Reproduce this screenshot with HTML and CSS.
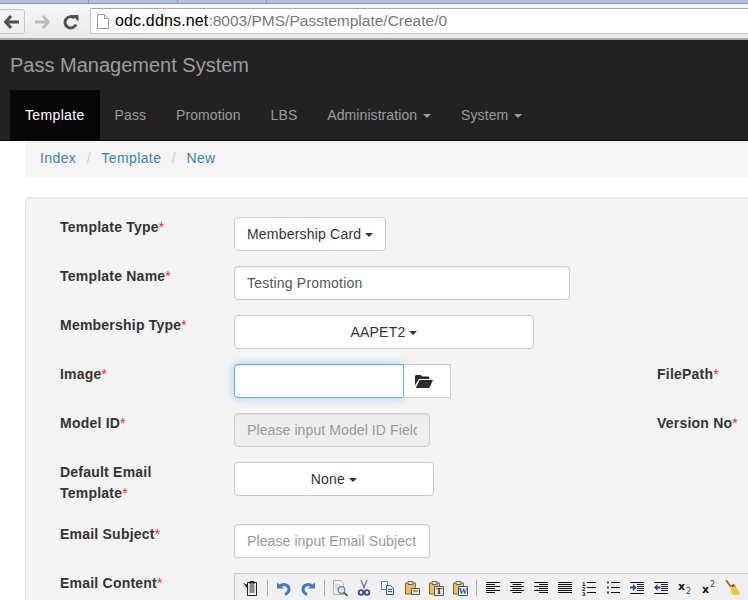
FILE: index.html
```html
<!DOCTYPE html>
<html lang="en">
<head>
    <meta charset="UTF-8">
    <meta name="viewport" content="width=device-width, initial-scale=1.0">
    <title>Pass Management System</title>
    <link rel="stylesheet" href="styles.css">
</head>
<body>
    <div class="browser-tabs"><span></span><span></span><span></span></div>
    <div class="browser-bar">
        <div class="browser-btn browser-back">
            <svg width="16" height="14" viewBox="0 0 16 14"><path d="M7 1 1.500 7 7 13M2 7h13" fill="none" stroke="#4f4f4f" stroke-width="3"/></svg>
        </div>
        <div class="browser-btn">
            <svg width="16" height="14" viewBox="0 0 16 14"><path d="M9 1l5.500 6L9 13M14 7H1" fill="none" stroke="#bdbdbd" stroke-width="3"/></svg>
        </div>
        <div class="browser-btn browser-reload">
            <svg width="16" height="16" viewBox="0 0 16 16"><path d="M13 10.500A5.700 5.700 0 1 1 11.500 4" fill="none" stroke="#505050" stroke-width="3"/><path d="M9 1h6.500v6.500z" fill="#505050"/></svg>
        </div>
        <div class="address">
            <svg width="12" height="15" viewBox="0 0 12 15"><path d="M.5.500h7l4 4v10H.5z" fill="#fff" stroke="#9a9a9a"/><path d="M7.500.500v4h4" fill="#e4e4e4" stroke="#9a9a9a"/></svg>
            <span class="address-host">odc.ddns.net</span><span class="address-path">:8003/PMS/Passtemplate/Create/0</span>
        </div>
    </div>

    <nav class="navbar">
        <a class="brand" href="#">Pass Management System</a>
        <ul class="nav">
            <li class="active"><a href="#">Template</a></li>
            <li><a href="#">Pass</a></li>
            <li><a href="#">Promotion</a></li>
            <li><a href="#">LBS</a></li>
            <li><a href="#">Administration <b class="caret"></b></a></li>
            <li><a href="#">System <b class="caret"></b></a></li>
        </ul>
    </nav>

    <div class="container">
        <ol class="breadcrumb">
            <li><a href="#">Index</a></li>
            <li><a href="#">Template</a></li>
            <li><a href="#">New</a></li>
        </ol>

        <form class="well">
            <div class="form-row">
                <label>Template Type<span class="req">*</span></label>
                <div><button type="button" class="btn">Membership Card <b class="caret"></b></button></div>
            </div>
            <div class="form-row">
                <label>Template Name<span class="req">*</span></label>
                <div><input class="field field-name" type="text" value="Testing Promotion"></div>
            </div>
            <div class="form-row">
                <label>Membership Type<span class="req">*</span></label>
                <div><button type="button" class="btn btn-wide">AAPET2 <b class="caret"></b></button></div>
            </div>
            <div class="form-row">
                <label>Image<span class="req">*</span></label>
                <div class="input-group">
                    <input class="field field-image" type="text">
                    <span class="addon">
                        <svg width="18" height="14" viewBox="0 0 18 14"><path d="M0 2.500C0 1.500.7 1 1.500 1H6l1 1.500h6c.8 0 1.300.5 1.300 1.300V5H4L0 11.500z" fill="#2b2b2b"/><path d="M4.600 6H18l-3.600 8H.8z" fill="#2b2b2b"/></svg>
                    </span>
                </div>
                <label>FilePath<span class="req">*</span></label>
            </div>
            <div class="form-row">
                <label>Model ID<span class="req">*</span></label>
                <div><input class="field field-std" type="text" placeholder="Please input Model ID Field" disabled></div>
                <label>Version No<span class="req">*</span></label>
            </div>
            <div class="form-row">
                <label>Default Email Template<span class="req">*</span></label>
                <div><button type="button" class="btn btn-mid">None <b class="caret"></b></button></div>
            </div>
            <div class="form-row">
                <label>Email Subject<span class="req">*</span></label>
                <div><input class="field field-std" type="text" placeholder="Please input Email Subject"></div>
            </div>
            <div class="form-row">
                <label>Email Content<span class="req">*</span></label>
                <div class="editor">
                    <div class="toolbar">
                        <span class="tool"><svg width="16" height="16" viewBox="0 0 16 16"><path d="M4.500 2.500h9v13h-9z" fill="#eee" stroke="#222"/><path d="M7 1.500h4v2.500H7zM6.500 6h5M6.500 8h5M6.500 10h5M6.500 12h5" fill="none" stroke="#222"/><path d="M0 3l5 2v4z" fill="#222"/></svg></span>
                        <span class="tool-sep"></span>
                        <span class="tool"><svg width="16" height="16" viewBox="0 0 16 16"><path d="M3 7c3-4 10-3 10 2.500 0 2.500-2 4-4 5" fill="none" stroke="#3f78c4" stroke-width="3"/><path d="M1 2.500l7 6H1z" fill="#3f78c4"/></svg></span>
                        <span class="tool"><svg width="16" height="16" viewBox="0 0 16 16"><path d="M13 7C10 3 3 4 3 9.500c0 2.500 2 4 4 5" fill="none" stroke="#3f78c4" stroke-width="3"/><path d="M15 2.500l-7 6h7z" fill="#3f78c4"/></svg></span>
                        <span class="tool-sep tool-sep-narrow"></span>
                        <span class="tool"><svg width="16" height="16" viewBox="0 0 16 16"><path d="M1.500.500h7l3 3v11h-10z" fill="#f2f2f2" stroke="#b0b0b0"/><path d="M3 5h5M3 7h3M3 9h3" stroke="#c4c4c4"/><circle cx="9.500" cy="10" r="3.300" fill="#dbe8f5" stroke="#6c8296" stroke-width="1.200"/><path d="M12 12.500l3.500 3.500" stroke="#444" stroke-width="1.600"/></svg></span>
                        <span class="tool"><svg width="16" height="16" viewBox="0 0 16 16"><path d="M5 0l3.500 8.500M11 0 7.500 8.500" stroke="#777" stroke-width="1.300"/><circle cx="5" cy="12.500" r="2.300" fill="none" stroke="#2d4fa8" stroke-width="1.800"/><circle cx="11" cy="12.500" r="2.300" fill="none" stroke="#2d4fa8" stroke-width="1.800"/></svg></span>
                        <span class="tool"><svg width="16" height="16" viewBox="0 0 16 16"><path d="M1.500 1.500h6v8h-6z" fill="#fff" stroke="#5c86c0"/><path d="M6.500 5.500h4l3 3v6h-7z" fill="#dce8f7" stroke="#315d9e"/><path d="M8 9.500h4M8 11.500h4" stroke="#315d9e"/></svg></span>
                        <span class="tool"><svg width="16" height="16" viewBox="0 0 16 16"><path d="M1.500 3h10v11h-10z" fill="#e8c15a" stroke="#8a6a1c"/><path d="M4 1.500h5v3H4z" fill="#ddd" stroke="#666"/><path d="M7.500 8.500h8v6h-8z" fill="#e6e6e6" stroke="#555"/><path d="M9 11h5" stroke="#555"/></svg></span>
                        <span class="tool"><svg width="16" height="16" viewBox="0 0 16 16"><path d="M1.500 3h10v11h-10z" fill="#e8c15a" stroke="#8a6a1c"/><path d="M4 1.500h5v3H4z" fill="#ddd" stroke="#666"/><path d="M6.500 6.500h9v9h-9z" fill="#e6e6e6" stroke="#555"/><text x="11" y="14" class="tool-glyph" fill="#222">T</text></svg></span>
                        <span class="tool"><svg width="16" height="16" viewBox="0 0 16 16"><path d="M1.500 3h10v11h-10z" fill="#e8c15a" stroke="#8a6a1c"/><path d="M4 1.500h5v3H4z" fill="#ddd" stroke="#666"/><path d="M6.500 6.500h9v9h-9z" fill="#eef3fb" stroke="#2d5aa8"/><text x="11" y="14" class="tool-glyph" fill="#2d5aa8">W</text></svg></span>
                        <span class="tool-sep"></span>
                        <span class="tool"><svg width="16" height="16" viewBox="0 0 16 16"><path d="M1 2.500h14M1 4.500h9M1 6.500h14M1 8.500h9M1 10.500h14M1 12.500h9" stroke="#111"/></svg></span>
                        <span class="tool"><svg width="16" height="16" viewBox="0 0 16 16"><path d="M1 2.500h14M3.500 4.500h9M1 6.500h14M3.500 8.500h9M1 10.500h14M3.500 12.500h9" stroke="#111"/></svg></span>
                        <span class="tool"><svg width="16" height="16" viewBox="0 0 16 16"><path d="M1 2.500h14M6 4.500h9M1 6.500h14M6 8.500h9M1 10.500h14M6 12.500h9" stroke="#111"/></svg></span>
                        <span class="tool"><svg width="16" height="16" viewBox="0 0 16 16"><path d="M1 2.500h14M1 4.500h14M1 6.500h14M1 8.500h14M1 10.500h14M1 12.500h14" stroke="#111"/></svg></span>
                        <span class="tool"><svg width="16" height="16" viewBox="0 0 16 16"><text x="1" y="5.500" class="tool-num">1</text><text x="1" y="10.500" class="tool-num">2</text><text x="1" y="15.500" class="tool-num">3</text><path d="M6 2.500h9M6 7.500h9M6 12.500h9" stroke="#111"/></svg></span>
                        <span class="tool"><svg width="16" height="16" viewBox="0 0 16 16"><path d="M2 1.500h2v2H2zM2 6.500h2v2H2zM2 11.500h2v2H2z" fill="#444"/><path d="M6 2.500h9M6 7.500h9M6 12.500h9" stroke="#111"/></svg></span>
                        <span class="tool"><svg width="16" height="16" viewBox="0 0 16 16"><path d="M1 2.500h14M1 13.500h14" stroke="#111"/><path d="M8 4.500h7M8 6.500h7M8 8.500h7M8 10.500h7" stroke="#222"/><path d="M1 6.500h3V4l3.500 3.500L4 11V8.500H1z" fill="#234a8e"/></svg></span>
                        <span class="tool"><svg width="16" height="16" viewBox="0 0 16 16"><path d="M1 2.500h14M1 13.500h14" stroke="#111"/><path d="M8 4.500h7M8 6.500h7M8 8.500h7M8 10.500h7" stroke="#222"/><path d="M7.500 6.500h-3V4L1 7.500 4.500 11V8.500h3z" fill="#234a8e"/></svg></span>
                        <span class="tool"><svg width="16" height="16" viewBox="0 0 16 16"><text x="1" y="10" class="tool-x">x</text><text x="9" y="14" class="tool-sub">2</text></svg></span>
                        <span class="tool"><svg width="16" height="16" viewBox="0 0 16 16"><text x="1" y="13" class="tool-x">x</text><text x="9" y="7" class="tool-sub">2</text></svg></span>
                        <span class="tool"><svg width="16" height="16" viewBox="0 0 16 16"><path d="M1 0l5 7" stroke="#a8702a" stroke-width="2"/><path d="M6 5l3-1 2 3-3 2z" fill="#c0392b"/><path d="M6 8l4-2c2 2 4 5 5 8-3 2-7 1-9-1 0-2 0-4 0-5z" fill="#ecc92e"/></svg></span>
                    </div>
                    <div class="editor-body"></div>
                </div>
            </div>
        </form>
    </div>
</body>
</html>
```

FILE: styles.css
```css
html, body {
    height: 100%;
    overflow: hidden;
}
body {
    margin: 0;
    font-family: "Liberation Sans", Arial, sans-serif;
    font-size: 14px;
    line-height: 20px;
    color: #333;
    background-color: #fff;
}
a {
    text-decoration: none;
}
.browser-tabs {
    height: 3px;
    display: flex;
    background-color: #b4c0d6;
    border-bottom: 1px solid #8f9aad;
}
.browser-tabs span {
    width: 88px;
    border-right: 1px solid #8e9bb3;
}
.browser-bar {
    height: 36px;
    box-sizing: border-box;
    display: flex;
    align-items: flex-start;
    padding-top: 4px;
    background: linear-gradient(#f7f7f7, #e9e9e9);
    border-bottom: 2px solid #a8a8a8;
}
.browser-btn {
    width: 25px;
    height: 25px;
    flex: none;
    display: flex;
    align-items: center;
    justify-content: center;
    margin-right: 4px;
    margin-top: 1px;
}
.browser-back {
    box-sizing: border-box;
    background-color: #f0f0f0;
    border: 1px solid #c6c6c6;
    border-left: none;
    border-radius: 0 3px 3px 0;
}
.browser-reload {
    margin-right: 7px;
}
.address {
    flex: 1;
    height: 26px;
    box-sizing: border-box;
    display: flex;
    align-items: center;
    padding-left: 6px;
    background-color: #fff;
    border: 1px solid #c4c4c4;
    border-top-color: #a6a6a6;
    border-right: none;
    border-radius: 2px 0 0 2px;
    font-size: 16px;
}
.address svg {
    margin-right: 6px;
}
.address-host {
    color: #000;
    letter-spacing: 0.15px;
}
.address-path {
    color: #777;
    font-size: 15.5px;
}
.navbar {
    background-color: #222;
    border-bottom: 1px solid #080808;
}
.brand {
    display: block;
    height: 50px;
    padding-left: 10px;
    font-size: 20px;
    line-height: 50px;
    color: #9d9d9d;
}
.nav {
    display: flex;
    list-style: none;
    margin: 0;
    padding: 0 0 0 10px;
}
.nav a {
    display: block;
    padding: 15px;
    color: #9d9d9d;
    letter-spacing: 0.08px;
}
.nav .active a {
    color: #fff;
    background-color: #080808;
    letter-spacing: 0.35px;
}
.caret {
    display: inline-block;
    width: 0;
    height: 0;
    margin-left: 2px;
    vertical-align: middle;
    border-top: 4px solid;
    border-right: 4px solid transparent;
    border-left: 4px solid transparent;
}
.container {
    width: 1000px;
    padding-left: 25px;
}
.breadcrumb {
    display: flex;
    list-style: none;
    margin: 0 0 20px;
    padding: 7px 15px 9px;
    background-color: #f5f5f5;
    border-radius: 4px;
    letter-spacing: 0.4px;
}
.breadcrumb a {
    color: #3e7fbe;
}
.breadcrumb li + li::before {
    content: "/";
    padding: 0 10.400px;
    color: #ccc;
}
.well {
    padding: 19px 34px;
    background-color: #f4f4f4;
    border: 1px solid #e3e3e3;
    border-radius: 4px;
    box-shadow: inset 0 1px 1px rgba(0, 0, 0, 0.05);
}
.form-row {
    display: grid;
    grid-template-columns: 174px 423px 1fr;
    margin-bottom: 15px;
}
.form-row label {
    display: block;
    width: 140px;
    margin-bottom: 5px;
    font-weight: bold;
    line-height: 21px;
    letter-spacing: 0.22px;
}
.req {
    color: #f22;
    font-weight: normal;
}
.btn {
    height: 34px;
    padding: 6px 12px;
    font: inherit;
    letter-spacing: 0.2px;
    color: #333;
    background-color: #fff;
    border: 1px solid #ccc;
    border-radius: 4px;
}
.btn .caret {
    margin-left: 0;
}
.btn-wide {
    width: 300px;
}
.btn-mid {
    width: 200px;
}
.field {
    display: block;
    height: 34px;
    box-sizing: border-box;
    padding: 6px 12px;
    font: inherit;
    letter-spacing: 0.2px;
    color: #555;
    background-color: #fff;
    border: 1px solid #ccc;
    border-radius: 4px;
    box-shadow: inset 0 1px 1px rgba(0, 0, 0, 0.075);
}
.field::placeholder {
    color: #999;
    opacity: 1;
    letter-spacing: 0.1px;
}
.field:disabled {
    background-color: #eee;
}
.field-name {
    width: 336px;
}
.field-std {
    width: 196px;
}
.field-image {
    width: 170px;
    border-color: #66afe9;
    border-radius: 4px 0 0 4px;
    box-shadow: inset 0 1px 1px rgba(0, 0, 0, 0.075), 0 0 8px rgba(102, 175, 233, 0.6);
}
.input-group {
    display: flex;
}
.addon {
    width: 47px;
    height: 34px;
    box-sizing: border-box;
    display: flex;
    align-items: center;
    padding-left: 11px;
    background-color: #fff;
    border: 1px solid #ccc;
    border-left: none;
}
.editor {
    grid-column: 2 / 4;
    width: 760px;
    border: 1px solid #c8c8c8;
}
.toolbar {
    display: flex;
    align-items: center;
    height: 27px;
    padding-left: 4px;
    background-color: #f0f0f0;
}
.tool {
    width: 24px;
    flex: none;
    display: flex;
    justify-content: center;
}
.tool-sep {
    width: 9px;
    height: 16px;
    flex: none;
    background: linear-gradient(#a9a9a9, #a9a9a9) center / 1px 100% no-repeat;
}
.tool-sep-narrow {
    width: 8px;
}
.tool-glyph {
    font: bold 9px "Liberation Serif", serif;
    text-anchor: middle;
}
.tool-num {
    font: bold 5px "DejaVu Sans", sans-serif;
    fill: #222;
}
.tool-x {
    font: bold 11px "DejaVu Sans", sans-serif;
    fill: #111;
}
.tool-sub {
    font: 8px "DejaVu Sans", sans-serif;
    fill: #234a8e;
}
.editor-body {
    height: 200px;
    background-color: #fff;
}
```
